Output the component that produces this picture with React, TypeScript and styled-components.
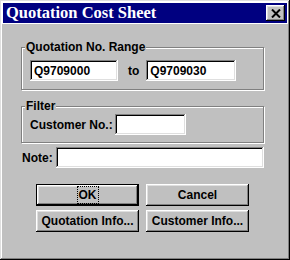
import React from 'react';
import styled, { createGlobalStyle } from 'styled-components';

const GlobalStyle = createGlobalStyle`
  html, body {
    margin: 0;
    padding: 0;
    background: #c0c0c0;
  }
  * {
    box-sizing: border-box;
  }
`;

const Window = styled.div`
  width: 290px;
  height: 260px;
  background: #c0c0c0;
  padding: 3px;
  box-shadow: inset -1px -1px #000, inset 1px 1px #dfdfdf, inset -2px -2px #808080, inset 2px 2px #fff;
  display: flex;
  flex-direction: column;
  font-family: 'Liberation Sans', Arial, sans-serif;
  font-size: 12px;
  font-weight: 700;
  color: #000;
`;

const TitleBar = styled.div`
  height: 20px;
  background: #000080;
  outline: 1px solid #fff;
  display: flex;
  align-items: center;
  justify-content: space-between;
  padding: 0 2px 0 3px;
`;

const Title = styled.span`
  font-family: 'Liberation Serif', 'Times New Roman', serif;
  font-size: 16.5px;
  font-weight: 700;
  color: #fff;
  line-height: 20px;
`;

const CloseButton = styled.div`
  width: 19px;
  height: 16px;
  background: #c0c0c0;
  box-shadow: inset -1px -1px #000, inset 1px 1px #fff, inset -2px -2px #808080, inset 2px 2px #dfdfdf;
  display: flex;
  align-items: center;
  justify-content: center;
`;

const Body = styled.div`
  padding: 17px 23px 0 18px;
  display: flex;
  flex-direction: column;
`;

const Group = styled.fieldset<{ pad?: string; mt?: string }>`
  margin: ${({ mt }) => mt || '0'} 0 0 0;
  padding: ${({ pad }) => pad || '6px 8px 8px 8px'};
  border: 1px solid #808080;
  box-shadow: 1px 1px 0 #fff, inset 1px 1px 0 #fff;
  min-width: 0;
`;

const Legend = styled.legend`
  padding: 0 1px;
  margin-left: -5px;
  background: #c0c0c0;
  line-height: 14px;
`;

const Row = styled.div<{ gap?: string; mt?: string }>`
  display: flex;
  align-items: center;
  gap: ${({ gap }) => gap || '4px'};
  margin-top: ${({ mt }) => mt || '0'};
`;

const Field = styled.div<{ w?: string; grow?: boolean; ml?: string }>`
  width: ${({ w }) => w || 'auto'};
  flex: ${({ grow }) => (grow ? '1' : 'none')};
  margin-left: ${({ ml }) => ml || '0'};
  height: 21px;
  background: #fff;
  box-shadow: inset -1px -1px #fff, inset 1px 1px #808080, inset -2px -2px #dfdfdf, inset 2px 2px #000;
  padding: 0 4px;
  display: flex;
  align-items: center;
`;

const Label = styled.span<{ ml?: string }>`
  margin-left: ${({ ml }) => ml || '0'};
`;

const Buttons = styled.div`
  display: grid;
  grid-template-columns: 103px 103px;
  column-gap: 7px;
  row-gap: 4px;
  margin: 16px 0 0 15px;
`;

const Button = styled.div<{ isDefault?: boolean }>`
  height: 22px;
  background: #c0c0c0;
  display: flex;
  align-items: center;
  justify-content: center;
  border: ${({ isDefault }) => (isDefault ? '1px solid #000' : 'none')};
  box-shadow: inset -1px -1px #000, inset 1px 1px #fff, inset -2px -2px #808080, inset 2px 2px #dfdfdf;
`;

const Focus = styled.span`
  outline: 1px dotted #000;
  padding: 1px 1px;
  line-height: 14px;
`;

export default function App() {
  return (
    <>
      <GlobalStyle />
      <Window>
        <TitleBar>
          <Title>Quotation Cost Sheet</Title>
          <CloseButton>
            <svg width="10" height="9" viewBox="0 0 10 9">
              <path d="M1 0.5 L9 8.5 M9 0.5 L1 8.5" stroke="#000" strokeWidth="2" />
            </svg>
          </CloseButton>
        </TitleBar>
        <Body>
          <Group>
            <Legend>Quotation No. Range</Legend>
            <Row gap="0">
              <Field w="88px">Q9709000</Field>
              <Label ml="10px">to</Label>
              <Field w="90px" ml="7px">Q9709030</Field>
            </Row>
          </Group>
          <Group mt="9px" pad="1px 8px 7px 8px">
            <Legend>Filter</Legend>
            <Row gap="2px">
              <Label>Customer No.:</Label>
              <Field w="71px" />
            </Row>
          </Group>
          <Row gap="3px" mt="4px">
            <Label ml="1px">Note:</Label>
            <Field grow />
          </Row>
          <Buttons>
            <Button isDefault>
              <Focus>OK</Focus>
            </Button>
            <Button>Cancel</Button>
            <Button>Quotation Info...</Button>
            <Button>Customer Info...</Button>
          </Buttons>
        </Body>
      </Window>
    </>
  );
}
